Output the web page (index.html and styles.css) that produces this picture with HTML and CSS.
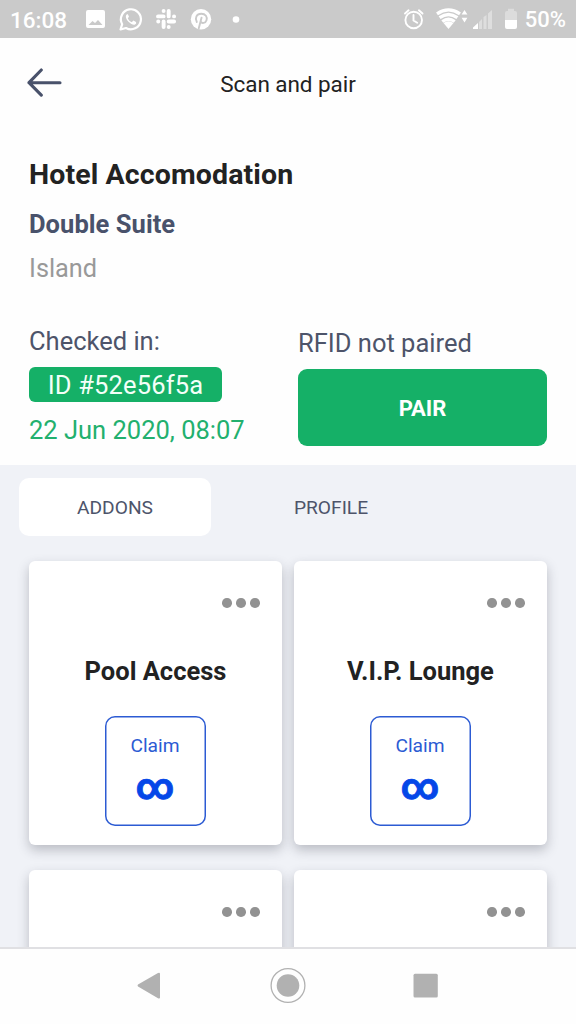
FILE: index.html
```html
<!DOCTYPE html>
<html lang="en">
<head>
<meta charset="utf-8">
<title>Scan and pair</title>
<link rel="stylesheet" href="styles.css">
</head>
<body>
<div class="phone">
  <div class="status">
    <span class="clock">16:08</span>
    <svg class="status-left" width="160" height="38" viewBox="80 0 160 38" fill="#fff">
      <path fill-rule="evenodd" d="M88 10h15q2 0 2 2v14q0 2-2 2H88q-2 0-2-2V12q0-2 2-2zM88.500 25h14l-4.500-5-3 3-2.500-2z"/>
      <path d="M120.500 29.500l1.700-5.300a10 10 0 1 1 3.800 3.800z" fill="none" stroke="#fff" stroke-width="2.200" stroke-linejoin="round"/>
      <path d="M127.200 14.200c-2.600 1.300-1 5.300 1.600 7.800s6.200 3.900 7.400 1.200l-.2-1.200-2.700-1.400-1.500 1.600c-2-.9-3.200-2-4-4l1.200-1.400-1.100-2.600z"/>
      <g stroke="#fff" stroke-width="3.900" stroke-linecap="round" fill="none">
        <path d="M163.600 11v.1M163.600 16.400h-5.600M168.700 11v5.400M174 16.400h.1M168.700 21.500h5.400M168.700 27v.1M163.600 21.500v5.500M158.200 21.500h.1"/>
      </g>
      <circle cx="201" cy="19.300" r="10.200"/>
      <path d="M196.800 22c-2.200-4-.3-8.300 4.500-8.300 4.300 0 6.300 3.200 5.200 6.500-1 3.200-4.800 3.600-5.800 1.300M201.600 17.600l-2.900 11" fill="none" stroke="#cacaca" stroke-width="1.900" stroke-linecap="round"/>
      <circle cx="236" cy="19.500" r="3.300"/>
    </svg>
    <svg class="status-right" width="116" height="38" viewBox="402 0 116 38" fill="#fff">
      <g fill="none" stroke="#fff" stroke-width="1.900" stroke-linecap="round">
        <circle cx="413.700" cy="20" r="8.300"/>
        <path d="M413.500 15v5.500l3.700 2.300M405 13.500l3.600-3.200M422.500 13.500l-3.600-3.200"/>
      </g>
      <path d="M448.500 29l-5-6q5-3.600 10 0z"/>
      <path d="M442.300 21.500q6.200-4.400 12.400 0M439.600 17.700q8.900-6.500 17.800 0M437 13.800q11.500-7.800 23 0" fill="none" stroke="#fff" stroke-width="3.300"/>
      <path d="M464.500 10l2.900 4.600h-5.800zM464.500 22.500l2.900-4.700h-5.800z"/>
      <path d="M473 29v-1.500l5-4.500v6z"/>
      <path d="M479 22l3-3v10h-3zM483.500 17l3-2v14h-3zM488 13.500l4-3.500v19h-4z" opacity=".38"/>
      <path d="M505 13q0-2 2-2h1V8.700h6V11h1q2 0 2 2v7h-12z" opacity=".35"/>
      <path d="M505 20h12v7q0 2-2 2h-8q-2 0-2-2z"/>
    </svg>
    <span class="battery">50%</span>
  </div>

  <header class="topbar">
    <svg class="back" width="36" height="30" viewBox="0 0 36 30" fill="none" stroke="#49526b" stroke-width="3.100" stroke-linecap="round" stroke-linejoin="round"><path d="M33 14.700H2M14.300 2L2 14.700l12.300 12.500"/></svg>
    <span class="screen-title">Scan and pair</span>
  </header>

  <main class="booking">
    <h1 class="name">Hotel Accomodation</h1>
    <h2 class="room">Double Suite</h2>
    <p class="place">Island</p>
    <div class="stay">
      <div class="checkin">
        <span class="label">Checked in:</span>
        <span class="badge">ID #52e56f5a</span>
        <span class="date">22 Jun 2020, 08:07</span>
      </div>
      <div class="rfid">
        <span class="label">RFID not paired</span>
        <button class="pair">PAIR</button>
      </div>
    </div>
  </main>

  <section class="panel">
    <div class="tabs"><div class="tab active">ADDONS</div><div class="tab">PROFILE</div></div>
    <div class="cards">
      <article class="card">
        <div class="more"><i></i><i></i><i></i></div>
        <h3 class="addon">Pool Access</h3>
        <div class="claim"><span class="claim-label">Claim</span><span class="amount">∞</span></div>
      </article>
      <article class="card">
        <div class="more"><i></i><i></i><i></i></div>
        <h3 class="addon">V.I.P. Lounge</h3>
        <div class="claim"><span class="claim-label">Claim</span><span class="amount">∞</span></div>
      </article>
      <article class="card"><div class="more"><i></i><i></i><i></i></div></article>
      <article class="card"><div class="more"><i></i><i></i><i></i></div></article>
    </div>
  </section>

  <nav class="navbar">
    <svg width="576" height="75" viewBox="0 949 576 75" fill="#b1b1b1">
      <path d="M138 984.500l20-11.500q2-.8 2 1v23.500q0 1.500-2 .8l-20-11.800q-1-1 0-2z"/>
      <circle cx="288" cy="985.500" r="11.300"/>
      <circle cx="288" cy="985.500" r="16.900" fill="none" stroke="#b1b1b1" stroke-width="1.300"/>
      <rect x="413.500" y="973.700" width="24.300" height="23.800" rx="1.500"/>
    </svg>
  </nav>
</div>
</body>
</html>
```
FILE: styles.css
```css
* { box-sizing: border-box; }
body { margin: 0; font-family: Roboto, "Liberation Sans", sans-serif; color: #222; background: #fff; }
h1, h2, h3, p { margin: 0; }
.phone { width: 576px; height: 1024px; display: flex; flex-direction: column; overflow: hidden; background: #fefefe; }

.status { height: 38px; flex: none; display: flex; align-items: center; background: #cacaca; color: #fff; padding: 0 10px; }
.clock { width: 70px; font-size: 22.5px; font-weight: 500; line-height: 38px; padding-top: 2px; }
.status-left { flex: none; }
.status-right { flex: none; margin-left: 162px; }
.battery { margin-left: 7px; font-size: 22px; font-weight: 500; line-height: 38px; padding-top: 2px; white-space: nowrap; }

.topbar { height: 92px; flex: none; display: grid; grid-template-columns: 36px 1fr 36px; align-items: center; padding: 0 27px; }
.back { margin-top: -3px; }
.screen-title { text-align: center; font-size: 22.5px; letter-spacing: -0.05px; }

.booking { height: 335px; flex: none; padding: 25px 29px 0; }
.name { font-size: 28.500px; line-height: 40px; font-weight: 700; letter-spacing: 0.120px; }
.room { font-size: 25.500px; line-height: 58px; font-weight: 700; color: #49526b; letter-spacing: 0.050px; }
.place { font-size: 25.300px; line-height: 32px; color: #999; }
.stay { display: grid; grid-template-columns: 269px 1fr; padding-top: 39px; }
.checkin, .rfid { display: flex; flex-direction: column; align-items: flex-start; }
.label { font-size: 25.500px; line-height: 34px; color: #4d546a; }
.rfid { padding-top: 2px; }
.badge { margin-top: 9px; width: 193px; height: 35px; border-radius: 6px; background: #15b067; color: #f3fff8; font-size: 25.500px; line-height: 37px; text-align: center; letter-spacing: 0.150px; }
.date { margin-top: 12px; font-size: 25.500px; line-height: 33px; color: #22b06e; }
.pair { margin-top: 9px; width: 249px; height: 77px; border: 0; border-radius: 9px; background: #15b067; color: #fff; font: 700 22px/79px Roboto, sans-serif; padding: 0; }

.panel { flex: 1; min-height: 0; overflow: hidden; background: #f0f2f7; padding-top: 13px; }
.tabs { display: flex; gap: 24px; padding-left: 19px; }
.tab { width: 192px; height: 58px; border-radius: 10px; font-size: 19.200px; line-height: 60px; text-align: center; color: #4d546a; }
.tab.active { background: #fff; }
.cards { display: grid; grid-template-columns: 253px 253px; grid-auto-rows: 284px; column-gap: 12px; row-gap: 25px; padding: 25px 29px 0; }
.card { display: flex; flex-direction: column; align-items: center; border-radius: 6px; background: #fff; box-shadow: 0 5px 12px rgba(40, 45, 60, 0.27); }
.more { align-self: flex-end; display: flex; gap: 4.300px; margin: 37px 22.500px 0 0; }
.more i { width: 9.600px; height: 9.600px; border-radius: 50%; background: #929292; }
.addon { margin-top: 46px; font-size: 25.500px; line-height: 34px; font-weight: 700; white-space: nowrap; }
.claim { margin: 28px 1px 0 0; width: 101px; height: 110px; display: flex; flex-direction: column; align-items: center; border-radius: 10px; box-shadow: inset 0 0 0 1.500px #2c5bd3; }
.claim-label { margin-top: 17px; font-size: 19.200px; line-height: 26px; color: #2c5bd3; }
.amount { margin-top: 3px; font-size: 37px; line-height: 50px; font-weight: 700; color: #0547e8; -webkit-text-stroke: 0.8px #0547e8; }

.navbar { height: 77px; flex: none; border-top: 2px solid #e0e0e3; background: #fefefe; }
.navbar svg { display: block; }
```
